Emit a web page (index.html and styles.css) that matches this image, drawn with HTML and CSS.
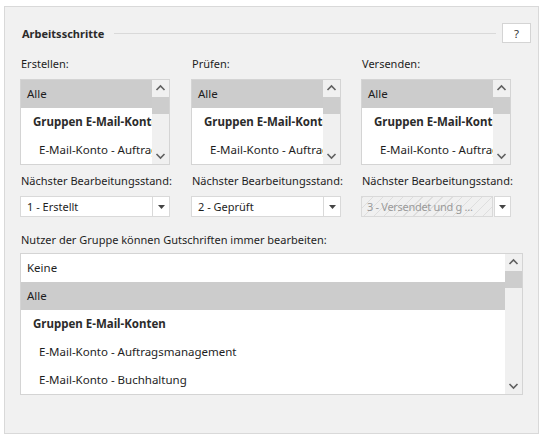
FILE: index.html
```html
<!DOCTYPE html>
<html lang="de">
<head>
    <meta charset="UTF-8">
    <meta name="viewport" content="width=device-width, initial-scale=1.0">
    <title>Arbeitsschritte</title>
    <link rel="stylesheet" href="styles.css">
</head>
<body>

<div class="panel">
    <div class="panel-header">
        <span class="panel-title">Arbeitsschritte</span>
        <span class="panel-line"></span>
        <button class="help-button">?</button>
    </div>

    <div class="columns">
        <!-- Erstellen -->
        <div class="column">
            <div class="field-label">Erstellen:</div>
            <div class="list-box small">
                <div class="list-items">
                    <div class="list-item selected">Alle</div>
                    <div class="list-item group">Gruppen E-Mail-Konten</div>
                    <div class="list-item account">E-Mail-Konto - Auftragsmanagement</div>
                </div>
                <div class="scrollbar">
                    <div class="scroll-arrow"><svg width="17" height="17" viewBox="0 0 17 17"><polyline points="4.5,10 8.5,6 12.5,10" /></svg></div>
                    <div class="scroll-thumb"></div>
                    <div class="scroll-space"></div>
                    <div class="scroll-arrow"><svg width="17" height="17" viewBox="0 0 17 17"><polyline points="4.5,7 8.5,11 12.5,7" /></svg></div>
                </div>
            </div>
            <div class="field-label next">Nächster Bearbeitungsstand:</div>
            <div class="combo">
                <span class="combo-text">1 - Erstellt</span>
                <span class="combo-button"><svg width="7" height="4" viewBox="0 0 7 4"><polygon points="0,0 7,0 3.5,4" /></svg></span>
            </div>
        </div>

        <!-- Prüfen -->
        <div class="column">
            <div class="field-label">Prüfen:</div>
            <div class="list-box small">
                <div class="list-items">
                    <div class="list-item selected">Alle</div>
                    <div class="list-item group">Gruppen E-Mail-Konten</div>
                    <div class="list-item account">E-Mail-Konto - Auftragsmanagement</div>
                </div>
                <div class="scrollbar">
                    <div class="scroll-arrow"><svg width="17" height="17" viewBox="0 0 17 17"><polyline points="4.5,10 8.5,6 12.5,10" /></svg></div>
                    <div class="scroll-thumb"></div>
                    <div class="scroll-space"></div>
                    <div class="scroll-arrow"><svg width="17" height="17" viewBox="0 0 17 17"><polyline points="4.5,7 8.5,11 12.5,7" /></svg></div>
                </div>
            </div>
            <div class="field-label next">Nächster Bearbeitungsstand:</div>
            <div class="combo">
                <span class="combo-text">2 - Geprüft</span>
                <span class="combo-button"><svg width="7" height="4" viewBox="0 0 7 4"><polygon points="0,0 7,0 3.5,4" /></svg></span>
            </div>
        </div>

        <!-- Versenden -->
        <div class="column">
            <div class="field-label">Versenden:</div>
            <div class="list-box small">
                <div class="list-items">
                    <div class="list-item selected">Alle</div>
                    <div class="list-item group">Gruppen E-Mail-Konten</div>
                    <div class="list-item account">E-Mail-Konto - Auftragsmanagement</div>
                </div>
                <div class="scrollbar">
                    <div class="scroll-arrow"><svg width="17" height="17" viewBox="0 0 17 17"><polyline points="4.5,10 8.5,6 12.5,10" /></svg></div>
                    <div class="scroll-thumb"></div>
                    <div class="scroll-space"></div>
                    <div class="scroll-arrow"><svg width="17" height="17" viewBox="0 0 17 17"><polyline points="4.5,7 8.5,11 12.5,7" /></svg></div>
                </div>
            </div>
            <div class="field-label next">Nächster Bearbeitungsstand:</div>
            <div class="combo disabled">
                <span class="combo-text">3 - Versendet und g ...</span>
                <span class="combo-button"><svg width="7" height="4" viewBox="0 0 7 4"><polygon points="0,0 7,0 3.5,4" /></svg></span>
            </div>
        </div>
    </div>

    <div class="field-label wide">Nutzer der Gruppe können Gutschriften immer bearbeiten:</div>
    <div class="list-box large">
        <div class="list-items">
            <div class="list-item">Keine</div>
            <div class="list-item selected">Alle</div>
            <div class="list-item group">Gruppen E-Mail-Konten</div>
            <div class="list-item account">E-Mail-Konto - Auftragsmanagement</div>
            <div class="list-item account">E-Mail-Konto - Buchhaltung</div>
        </div>
        <div class="scrollbar">
            <div class="scroll-arrow"><svg width="17" height="17" viewBox="0 0 17 17"><polyline points="4.5,10 8.5,6 12.5,10" /></svg></div>
            <div class="scroll-thumb"></div>
            <div class="scroll-space"></div>
            <div class="scroll-arrow"><svg width="17" height="17" viewBox="0 0 17 17"><polyline points="4.5,7 8.5,11 12.5,7" /></svg></div>
        </div>
    </div>
</div>

</body>
</html>
```

FILE: styles.css
```css
body {
    margin: 0;
    padding: 0;
    background-color: #fff;
    font-family: "Noto Sans", "Open Sans", sans-serif;
    font-size: 11.5px;
    color: #1e1e1e;
}
.panel {
    box-sizing: border-box;
    width: 535px;
    height: 428px;
    margin: 6px 0 0 4px;
    padding: 16px 7px 0 15px;
    background-color: #f1f1f1;
    border: 1px solid #d9d9d9;
}
.panel-header {
    display: flex;
    align-items: center;
    height: 20px;
}
.panel-title {
    padding-left: 2px;
    font-size: 11px;
    font-weight: bold;
    color: #2b2b2b;
}
.panel-line {
    flex: 1;
    height: 1px;
    margin: 1px 6px 0 10px;
    background-color: #d9d9d9;
}
.help-button {
    box-sizing: border-box;
    width: 29px;
    height: 20px;
    padding: 0;
    font-family: inherit;
    font-size: 11.5px;
    color: #333;
    background-color: #fff;
    border: 1px solid #d4d4d4;
}
.columns {
    display: grid;
    grid-template-columns: 171px 170px 150px;
    margin-top: 13px;
}
.column {
    width: 150px;
}
.field-label {
    height: 16px;
    line-height: 16px;
    padding-left: 1px;
    margin-bottom: 7px;
    font-size: 11px;
    white-space: nowrap;
}
.field-label.next {
    margin-top: 8px;
}
.field-label.wide {
    margin-top: 15px;
    margin-bottom: 5px;
}
.list-box {
    box-sizing: border-box;
    display: flex;
    background-color: #fff;
    border: 1px solid #d4d4d4;
}
.list-box.small {
    width: 150px;
    height: 86px;
}
.list-box.large {
    width: 503px;
    height: 142px;
}
.list-items {
    flex: 1;
    min-width: 0;
    overflow: hidden;
}
.list-item {
    height: 28px;
    line-height: 28px;
    padding-left: 6px;
    white-space: nowrap;
    overflow: hidden;
}
.list-item.selected {
    background-color: #cccccc;
}
.list-item.group {
    padding-left: 12px;
    font-weight: bold;
    color: #2b2b2b;
}
.list-item.account {
    padding-left: 18px;
}
.scrollbar {
    display: flex;
    flex-direction: column;
    width: 17px;
    background-color: #f0f0f0;
}
.scroll-arrow {
    height: 17px;
}
.scroll-arrow svg {
    display: block;
    fill: none;
    stroke: #606060;
    stroke-width: 1.6;
}
.scroll-thumb {
    height: 17px;
    background-color: #cdcdcd;
}
.scroll-space {
    flex: 1;
}
.combo {
    box-sizing: border-box;
    display: flex;
    width: 150px;
    height: 21px;
    background-color: #fff;
    border: 1px solid #d9d9d9;
}
.combo-text {
    flex: 1;
    padding-left: 6px;
    line-height: 19px;
    font-size: 11px;
    white-space: nowrap;
    overflow: hidden;
}
.combo-button {
    display: flex;
    align-items: center;
    justify-content: center;
    width: 16px;
    border-left: 1px solid #d9d9d9;
}
.combo-button svg {
    fill: #444;
}
.combo.disabled {
    border: none;
    background: none;
    gap: 1px;
}
.combo.disabled .combo-text {
    box-sizing: border-box;
    height: 21px;
    line-height: 19px;
    padding-left: 5px;
    letter-spacing: -0.3px;
    color: #9a9a9a;
    border: 1px solid #d9d9d9;
    background-color: #f0f0f0;
    background-image: repeating-linear-gradient(-45deg, #f0f0f0 0, #f0f0f0 6px, #dedede 6px, #dedede 7px);
}
.combo.disabled .combo-button {
    box-sizing: border-box;
    width: 17px;
    height: 21px;
    background-color: #fff;
    border: 1px solid #d9d9d9;
}
```
